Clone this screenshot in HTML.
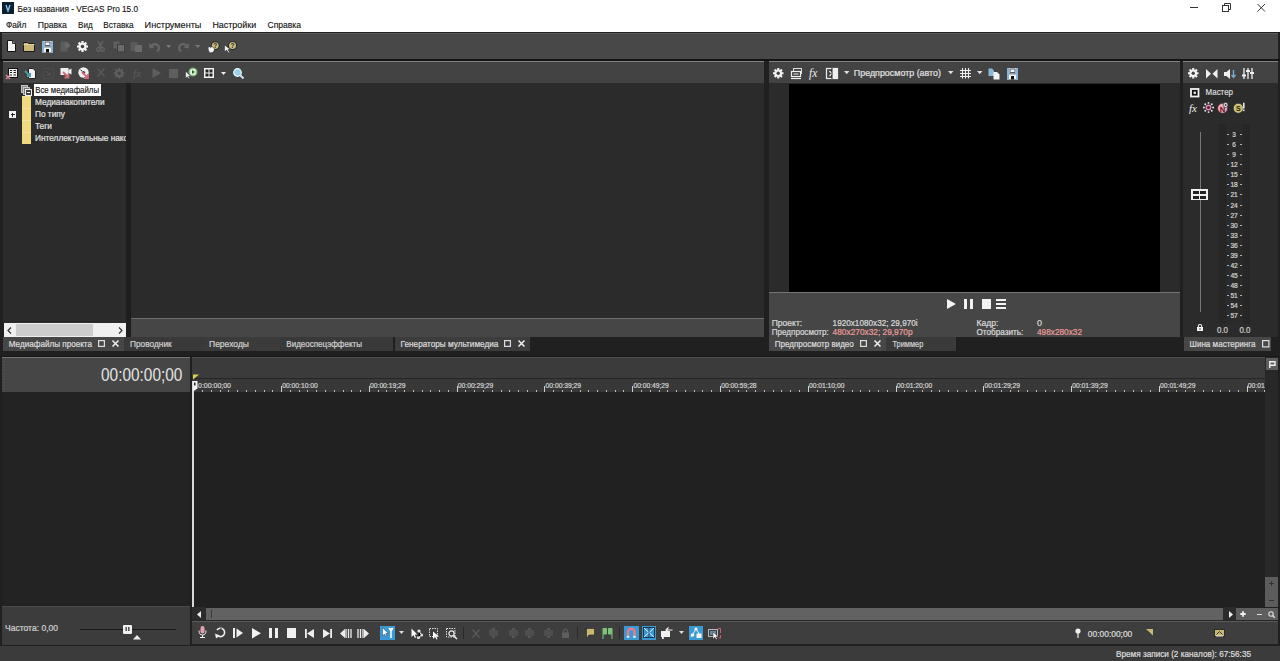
<!DOCTYPE html>
<html><head><meta charset="utf-8">
<style>
*{margin:0;padding:0;box-sizing:border-box}
html,body{width:1280px;height:661px;overflow:hidden;background:#1f1f1f;font-family:"Liberation Sans",sans-serif;position:relative}
.a{position:absolute}
.t{position:absolute;white-space:nowrap;line-height:1}
svg{overflow:visible}
</style></head><body>
<div class="a" style="left:0px;top:0px;width:1280px;height:32px;background:#fff;"></div>
<div class="a" style="left:2px;top:2px;width:12px;height:12px;background:#0c2032;"></div>
<svg class="a" style="left:2px;top:2px;" width="12" height="12" viewBox="0 0 12 12"><path d="M4 3 L6 9 L8 3" fill="none" stroke="#8cc8ea" stroke-width="1.3"/></svg>
<svg class="a" style="left:17px;top:-4px;" width="128" height="22"><text transform="translate(0.60 16.10) scale(1 1.08)" font-size="8.8" fill="#111" stroke="#111" stroke-width="0.12" font-family="Liberation Sans" textLength="120.50" lengthAdjust="spacingAndGlyphs">Без названия - VEGAS Pro 15.0</text></svg>
<div class="a" style="left:1190px;top:7px;width:8px;height:1px;background:#333;"></div>
<svg class="a" style="left:1222px;top:3px;" width="10" height="9" viewBox="0 0 10 9"><rect x="0.5" y="2.5" width="6" height="6" fill="none" stroke="#333"/><path d="M2.5 2.5 V0.5 H8.5 V6.5 H6.5" fill="none" stroke="#333"/></svg>
<svg class="a" style="left:1257px;top:4px;" width="9" height="8" viewBox="0 0 9 8"><path d="M0.5 0 L8 7.5 M8 0 L0.5 7.5" stroke="#333" stroke-width="1"/></svg>
<svg class="a" style="left:5px;top:12px;" width="28" height="22"><text transform="translate(0.90 16.00) scale(1 1.06)" font-size="8.9" fill="#111" stroke="#111" stroke-width="0.12" font-family="Liberation Sans" textLength="20.50" lengthAdjust="spacingAndGlyphs">Файл</text></svg>
<svg class="a" style="left:37px;top:12px;" width="37" height="22"><text transform="translate(0.70 16.00) scale(1 1.06)" font-size="8.9" fill="#111" stroke="#111" stroke-width="0.12" font-family="Liberation Sans" textLength="29.10" lengthAdjust="spacingAndGlyphs">Правка</text></svg>
<svg class="a" style="left:78px;top:12px;" width="23" height="22"><text transform="translate(0.00 16.00) scale(1 1.06)" font-size="8.9" fill="#111" stroke="#111" stroke-width="0.12" font-family="Liberation Sans" textLength="14.60" lengthAdjust="spacingAndGlyphs">Вид</text></svg>
<svg class="a" style="left:103px;top:12px;" width="38" height="22"><text transform="translate(0.20 16.00) scale(1 1.06)" font-size="8.9" fill="#111" stroke="#111" stroke-width="0.12" font-family="Liberation Sans" textLength="30.40" lengthAdjust="spacingAndGlyphs">Вставка</text></svg>
<svg class="a" style="left:144px;top:12px;" width="65" height="22"><text transform="translate(0.60 16.00) scale(1 1.06)" font-size="8.9" fill="#111" stroke="#111" stroke-width="0.12" font-family="Liberation Sans" textLength="56.80" lengthAdjust="spacingAndGlyphs">Инструменты</text></svg>
<svg class="a" style="left:212px;top:12px;" width="52" height="22"><text transform="translate(0.40 16.00) scale(1 1.06)" font-size="8.9" fill="#111" stroke="#111" stroke-width="0.12" font-family="Liberation Sans" textLength="43.80" lengthAdjust="spacingAndGlyphs">Настройки</text></svg>
<svg class="a" style="left:267px;top:12px;" width="42" height="22"><text transform="translate(0.50 16.00) scale(1 1.06)" font-size="8.9" fill="#111" stroke="#111" stroke-width="0.12" font-family="Liberation Sans" textLength="33.50" lengthAdjust="spacingAndGlyphs">Справка</text></svg>
<div class="a" style="left:0px;top:32px;width:1280px;height:629px;background:#202020;"></div>
<div class="a" style="left:2px;top:33px;width:1276px;height:1px;background:#5a5a5a;"></div>
<div class="a" style="left:2px;top:34px;width:1276px;height:25px;background:#484848;"></div>
<div class="a" style="left:0px;top:59px;width:1280px;height:2px;background:#141414;"></div>
<svg class="a" style="left:7px;top:40px;" width="9" height="12" viewBox="0 0 9 12"><path d="M0.5 0.5 H5.5 L8.5 3.5 V11.5 H0.5 Z" fill="#f2f2f2" stroke="#111" stroke-width="1"/><path d="M5.5 0.5 V3.5 H8.5" fill="#999" stroke="#111" stroke-width="0.8"/></svg>
<svg class="a" style="left:23px;top:41px;" width="12" height="11" viewBox="0 0 12 11"><path d="M0.5 1.5 H4.5 L5.5 2.5 H11.5 V10.5 H0.5 Z" fill="#c9b87a" stroke="#1a1a1a" stroke-width="1"/><path d="M0.5 3.5 H11.5" stroke="#e3d69c" stroke-width="1"/></svg>
<svg class="a" style="left:41.5px;top:40.5px;" width="11" height="11.5" viewBox="0 0 11 11.5"><rect x="0" y="0" width="11" height="11.5" fill="#f4f6f8"/><rect x="0" y="0" width="2" height="11.5" fill="#86b4dc"/><rect x="9" y="0" width="2" height="11.5" fill="#86b4dc"/><rect x="3" y="1" width="5" height="3.5" fill="#f4f6f8" stroke="#24384c" stroke-width="0.8"/><rect x="2" y="5.5" width="7" height="0.8" fill="#2a3e52"/><rect x="4" y="8" width="3" height="3.5" fill="#111"/></svg>
<svg class="a" style="left:59.5px;top:40.5px;" width="11" height="11" viewBox="0 0 11 11"><rect x="0.5" y="0.5" width="7" height="10" fill="#5c5c5c"/><path d="M4 3 L8 1 L10.5 5 L6 8 Z" fill="#676767"/></svg>
<svg class="a" style="left:77.3px;top:41px;" width="11" height="11" viewBox="0 0 11 11"><rect x="4.40" y="0" width="2.20" height="5.50" fill="#f2f2f2" transform="rotate(0 5.5 5.5)"/><rect x="4.40" y="0" width="2.20" height="5.50" fill="#f2f2f2" transform="rotate(45 5.5 5.5)"/><rect x="4.40" y="0" width="2.20" height="5.50" fill="#f2f2f2" transform="rotate(90 5.5 5.5)"/><rect x="4.40" y="0" width="2.20" height="5.50" fill="#f2f2f2" transform="rotate(135 5.5 5.5)"/><rect x="4.40" y="0" width="2.20" height="5.50" fill="#f2f2f2" transform="rotate(180 5.5 5.5)"/><rect x="4.40" y="0" width="2.20" height="5.50" fill="#f2f2f2" transform="rotate(225 5.5 5.5)"/><rect x="4.40" y="0" width="2.20" height="5.50" fill="#f2f2f2" transform="rotate(270 5.5 5.5)"/><rect x="4.40" y="0" width="2.20" height="5.50" fill="#f2f2f2" transform="rotate(315 5.5 5.5)"/><circle cx="5.5" cy="5.5" r="3.96" fill="#f2f2f2"/><circle cx="5.5" cy="5.5" r="1.76" fill="#424242"/></svg>
<svg class="a" style="left:96px;top:41px;" width="9" height="11" viewBox="0 0 9 11"><path d="M2 0 L6 7 M7 0 L3 7" stroke="#646464" stroke-width="1.5"/><circle cx="2.5" cy="8.5" r="1.8" fill="none" stroke="#646464" stroke-width="1.2"/><circle cx="6.5" cy="8.5" r="1.8" fill="none" stroke="#646464" stroke-width="1.2"/></svg>
<svg class="a" style="left:112.5px;top:40.5px;" width="12" height="11" viewBox="0 0 12 11"><rect x="0.5" y="0.5" width="6" height="7" fill="#5e5e5e"/><rect x="4.5" y="3.5" width="7" height="7.5" fill="#6a6a6a" stroke="#3e3e3e"/></svg>
<svg class="a" style="left:130px;top:40.5px;" width="12" height="11" viewBox="0 0 12 11"><rect x="0.5" y="1" width="7" height="9" fill="#5a5a5a"/><rect x="5" y="4" width="7" height="7" fill="#6a6a6a"/></svg>
<svg class="a" style="left:149px;top:41.5px;" width="11" height="10" viewBox="0 0 11 10"><path d="M2 4 Q6 0 9.5 4 Q11 7 8 9.5" fill="none" stroke="#676767" stroke-width="2"/><path d="M0 1 L0.5 6.5 L5.5 5.5 Z" fill="#676767"/></svg>
<svg class="a" style="left:166.3px;top:44.5px;" width="5.5" height="3" viewBox="0 0 5.5 3"><path d="M0 0 H5.5 L2.75 3 Z" fill="#777"/></svg>
<svg class="a" style="left:177.8px;top:41.5px;" width="11" height="10" viewBox="0 0 11 10"><path d="M9 4 Q5 0 1.5 4 Q0 7 3 9.5" fill="none" stroke="#676767" stroke-width="2"/><path d="M11 1 L10.5 6.5 L5.5 5.5 Z" fill="#676767"/></svg>
<svg class="a" style="left:195.3px;top:44.5px;" width="5.5" height="3" viewBox="0 0 5.5 3"><path d="M0 0 H5.5 L2.75 3 Z" fill="#777"/></svg>
<svg class="a" style="left:206.5px;top:40.5px;" width="13" height="12" viewBox="0 0 13 12"><circle cx="8.3" cy="4.6" r="4.3" fill="#222"/><circle cx="8.3" cy="4.6" r="3.4" fill="#cdbf80"/><text x="8.3" y="7.2" font-size="6.5" font-weight="bold" text-anchor="middle" fill="#222" font-family="Liberation Sans">?</text><path d="M1 6.5 Q2.5 5 4 6.5 L4.5 5.5 Q6.5 5.5 7.5 8 Q7 12 3.5 11.8 Q1 11 1 6.5Z" fill="#f2f2f2" stroke="#222" stroke-width="0.5"/></svg>
<svg class="a" style="left:224px;top:40.5px;" width="13" height="12" viewBox="0 0 13 12"><circle cx="8.5" cy="4.6" r="4.4" fill="#222"/><circle cx="8.5" cy="4.6" r="3.5" fill="#cdbf80"/><text x="8.5" y="7.2" font-size="6.5" font-weight="bold" text-anchor="middle" fill="#222" font-family="Liberation Sans">?</text><path d="M0.5 4 L0.5 11 L2.5 9 L4.5 12 L5.5 11.3 L4 8.5 L6.5 8.5 Z" fill="#f2f2f2" stroke="#222" stroke-width="0.5"/></svg>
<div class="a" style="left:3px;top:61px;width:761px;height:1px;background:#828282;"></div>
<div class="a" style="left:3px;top:62px;width:761px;height:21px;background:#434343;"></div>
<svg class="a" style="left:6px;top:67.5px;" width="12" height="11" viewBox="0 0 12 11"><rect x="2.5" y="0.5" width="9" height="9" fill="#f0f0f0" stroke="#111"/><path d="M4 2.5 H6 M7.5 2.5 H10 M4 4.5 H6 M7.5 4.5 H10 M4 7 H6 M7.5 7 H10" stroke="#222" stroke-width="1.2"/><path d="M0 7 L4 11 M4 7 L0 11" stroke="#d68a9a" stroke-width="1.4"/></svg>
<svg class="a" style="left:24.5px;top:67.5px;" width="11" height="11" viewBox="0 0 11 11"><path d="M3.5 0.5 H8 L10.5 3 V10.5 H3.5 Z" fill="#f2f2f2" stroke="#222"/><path d="M0 3 L5 8 M5 5 V8 H2" fill="none" stroke="#4a9aaa" stroke-width="2"/></svg>
<svg class="a" style="left:42.5px;top:67.5px;" width="11" height="11" viewBox="0 0 11 11"><rect x="0.5" y="0.5" width="10" height="10" fill="none" stroke="#4a4a4a"/><path d="M3 3 L7 7 M7 4 V7 H4" fill="none" stroke="#555" stroke-width="1"/></svg>
<svg class="a" style="left:60px;top:67px;" width="12" height="12" viewBox="0 0 12 12"><rect x="0.5" y="1" width="8" height="7" fill="#f0f0f0"/><path d="M8.5 3 L11.5 1.5 V7.5 L8.5 6 Z" fill="#f0f0f0"/><path d="M3 5 L8.5 10.5 M8.5 6.5 V10.5 H4.5" fill="none" stroke="#d06a7a" stroke-width="1.8"/></svg>
<svg class="a" style="left:77.5px;top:67px;" width="12" height="12" viewBox="0 0 12 12"><circle cx="5.5" cy="5.5" r="5.2" fill="#f0f0f0"/><circle cx="5.5" cy="5.5" r="1.6" fill="#333"/><path d="M2.5 3 L4 4" stroke="#222" stroke-width="1"/><path d="M4 5 L10 11 M10 7 V11 H6" fill="none" stroke="#d06a7a" stroke-width="1.8"/></svg>
<svg class="a" style="left:97px;top:68px;" width="8" height="9" viewBox="0 0 8 9"><path d="M0.5 0.5 L7.5 8.5 M7.5 0.5 L0.5 8.5" stroke="#5a5a5a" stroke-width="1.2"/></svg>
<svg class="a" style="left:113.7px;top:67.5px;" width="10.5" height="10.5" viewBox="0 0 10.5 10.5"><rect x="4.20" y="0" width="2.10" height="5.25" fill="#5e5e5e" transform="rotate(0 5.25 5.25)"/><rect x="4.20" y="0" width="2.10" height="5.25" fill="#5e5e5e" transform="rotate(45 5.25 5.25)"/><rect x="4.20" y="0" width="2.10" height="5.25" fill="#5e5e5e" transform="rotate(90 5.25 5.25)"/><rect x="4.20" y="0" width="2.10" height="5.25" fill="#5e5e5e" transform="rotate(135 5.25 5.25)"/><rect x="4.20" y="0" width="2.10" height="5.25" fill="#5e5e5e" transform="rotate(180 5.25 5.25)"/><rect x="4.20" y="0" width="2.10" height="5.25" fill="#5e5e5e" transform="rotate(225 5.25 5.25)"/><rect x="4.20" y="0" width="2.10" height="5.25" fill="#5e5e5e" transform="rotate(270 5.25 5.25)"/><rect x="4.20" y="0" width="2.10" height="5.25" fill="#5e5e5e" transform="rotate(315 5.25 5.25)"/><circle cx="5.25" cy="5.25" r="3.78" fill="#5e5e5e"/><circle cx="5.25" cy="5.25" r="1.68" fill="#424242"/></svg>
<svg class="a" style="left:133px;top:67.5px;" width="10" height="11" viewBox="0 0 10 11"><text x="0" y="9" font-size="11" font-style="italic" font-family="Liberation Serif" fill="#5c5c5c">fx</text></svg>
<svg class="a" style="left:151.5px;top:68px;" width="9" height="10" viewBox="0 0 9 10"><path d="M0.5 0 L9 5 L0.5 10 Z" fill="#5e5e5e"/></svg>
<div class="a" style="left:169px;top:68.5px;width:9px;height:9px;background:#5e5e5e;"></div>
<svg class="a" style="left:185px;top:67px;" width="13" height="12" viewBox="0 0 13 12"><circle cx="8" cy="5" r="4.6" fill="#6ab06a"/><circle cx="8" cy="5" r="3.2" fill="#dff0df"/><path d="M7 3 L10 5 L7 7Z" fill="#2a6a2a"/><path d="M0.5 4 L0.5 11.5 L2.3 9.8 L3.8 12 L4.8 11.5 L3.5 9.3 L5.7 9.3 Z" fill="#f4f4f4" stroke="#222" stroke-width="0.5"/></svg>
<svg class="a" style="left:204px;top:68px;" width="10" height="10" viewBox="0 0 10 10"><rect x="0" y="0" width="10" height="10" fill="#f2f2f2"/><rect x="1.5" y="1.5" width="3" height="3" fill="#222"/><rect x="5.5" y="1.5" width="3" height="3" fill="#222"/><rect x="1.5" y="5.5" width="3" height="3" fill="#222"/><rect x="5.5" y="5.5" width="3" height="3" fill="#222"/></svg>
<svg class="a" style="left:221px;top:71.5px;" width="5" height="3" viewBox="0 0 5 3"><path d="M0 0 H5 L2.5 3 Z" fill="#eee"/></svg>
<svg class="a" style="left:232.5px;top:67.5px;" width="11" height="11" viewBox="0 0 11 11"><circle cx="4.5" cy="4.5" r="3.8" fill="#9fd0ea" stroke="#dff" stroke-width="1.2"/><path d="M7 7 L10.5 10.5" stroke="#cfe6f0" stroke-width="2"/></svg>
<div class="a" style="left:3px;top:83px;width:123px;height:240px;background:#2b2b2b;"></div>
<div class="a" style="left:126px;top:83px;width:5px;height:254px;background:#1e1e1e;"></div>
<div class="a" style="left:131px;top:83px;width:633px;height:235px;background:#2b2b2b;"></div>
<div class="a" style="left:131px;top:318px;width:633px;height:1px;background:#6e6e6e;"></div>
<div class="a" style="left:131px;top:319px;width:633px;height:18px;background:#464646;"></div>
<div class="a" style="left:4px;top:323px;width:122px;height:14px;background:#f0f0f0;"></div>
<div class="a" style="left:16px;top:324px;width:77px;height:12px;background:#cdcdcd;"></div>
<svg class="a" style="left:7px;top:327px;" width="5" height="7" viewBox="0 0 5 7"><path d="M4 0.5 L1 3.5 L4 6.5" fill="none" stroke="#333" stroke-width="1.2"/></svg>
<svg class="a" style="left:118px;top:327px;" width="5" height="7" viewBox="0 0 5 7"><path d="M1 0.5 L4 3.5 L1 6.5" fill="none" stroke="#333" stroke-width="1.2"/></svg>
<svg class="a" style="left:21px;top:84.5px;" width="11" height="11" viewBox="0 0 11 11"><rect x="0.5" y="0.5" width="6" height="7" fill="#888" stroke="#ddd" stroke-width="0.8"/><rect x="2.5" y="2.5" width="6" height="7" fill="#777" stroke="#ddd" stroke-width="0.8"/><rect x="4.5" y="4.5" width="6" height="6" fill="#444" stroke="#eee" stroke-width="1"/><path d="M6 7.5 H9" stroke="#eee"/></svg>
<div class="a" style="left:34px;top:84px;width:67px;height:12px;background:#ffffff;"></div>
<svg class="a" style="left:35px;top:77px;" width="72" height="22"><text transform="translate(0.20 16.00) scale(1 1.06)" font-size="8.3" fill="#111" stroke="#111" stroke-width="0.12" font-family="Liberation Sans" textLength="63.80" lengthAdjust="spacingAndGlyphs">Все медиафайлы</text></svg>
<div class="a" style="left:22px;top:96px;width:9px;height:12px;background:#f0da80;"></div>
<div class="a" style="left:22px;top:96px;width:9px;height:1px;background:#f3e6a5;"></div>
<div class="a" style="left:35px;top:96px;width:91px;height:12px;overflow:hidden">
<svg class="a" style="left:0px;top:-7px;" width="78" height="22"><text transform="translate(0.00 16.30) scale(1 1.1)" font-size="8.29" fill="#e0e0e0" stroke="#e0e0e0" stroke-width="0.22" font-family="Liberation Sans">Медианакопители</text></svg>
</div>
<div class="a" style="left:22px;top:108px;width:9px;height:12px;background:#f0da80;"></div>
<div class="a" style="left:22px;top:108px;width:9px;height:1px;background:#f3e6a5;"></div>
<div class="a" style="left:35px;top:108px;width:91px;height:12px;overflow:hidden">
<svg class="a" style="left:0px;top:-7px;" width="38" height="22"><text transform="translate(0.00 16.30) scale(1 1.1)" font-size="8.29" fill="#e0e0e0" stroke="#e0e0e0" stroke-width="0.22" font-family="Liberation Sans">По типу</text></svg>
</div>
<div class="a" style="left:22px;top:120px;width:9px;height:12px;background:#f0da80;"></div>
<div class="a" style="left:22px;top:120px;width:9px;height:1px;background:#f3e6a5;"></div>
<div class="a" style="left:35px;top:120px;width:91px;height:12px;overflow:hidden">
<svg class="a" style="left:0px;top:-7px;" width="25" height="22"><text transform="translate(0.00 16.30) scale(1 1.1)" font-size="8.29" fill="#e0e0e0" stroke="#e0e0e0" stroke-width="0.22" font-family="Liberation Sans">Теги</text></svg>
</div>
<div class="a" style="left:22px;top:132px;width:9px;height:12px;background:#f0da80;"></div>
<div class="a" style="left:22px;top:132px;width:9px;height:1px;background:#f3e6a5;"></div>
<div class="a" style="left:35px;top:132px;width:91px;height:12px;overflow:hidden">
<svg class="a" style="left:0px;top:-7px;" width="128" height="22"><text transform="translate(0.00 16.30) scale(1 1.1)" font-size="8.29" fill="#e0e0e0" stroke="#e0e0e0" stroke-width="0.22" font-family="Liberation Sans">Интеллектуальные накопители</text></svg>
</div>
<div class="a" style="left:9px;top:111px;width:7px;height:7px;background:#f0f0f0;"></div>
<div class="a" style="left:10.5px;top:114px;width:4px;height:1px;background:#222;"></div>
<div class="a" style="left:12px;top:112.5px;width:1px;height:4px;background:#222;"></div>
<div class="a" style="left:769px;top:61px;width:411px;height:1px;background:#828282;"></div>
<div class="a" style="left:769px;top:62px;width:411px;height:21px;background:#434343;"></div>
<div class="a" style="left:769px;top:83px;width:411px;height:209px;background:#2b2b2b;"></div>
<div class="a" style="left:789px;top:84px;width:371px;height:208px;background:#000;"></div>
<div class="a" style="left:769px;top:292px;width:411px;height:1px;background:#747474;"></div>
<div class="a" style="left:769px;top:293px;width:411px;height:44px;background:#464646;"></div>
<svg class="a" style="left:772.8px;top:67.8px;" width="10.5" height="10.5" viewBox="0 0 10.5 10.5"><rect x="4.20" y="0" width="2.10" height="5.25" fill="#f2f2f2" transform="rotate(0 5.25 5.25)"/><rect x="4.20" y="0" width="2.10" height="5.25" fill="#f2f2f2" transform="rotate(45 5.25 5.25)"/><rect x="4.20" y="0" width="2.10" height="5.25" fill="#f2f2f2" transform="rotate(90 5.25 5.25)"/><rect x="4.20" y="0" width="2.10" height="5.25" fill="#f2f2f2" transform="rotate(135 5.25 5.25)"/><rect x="4.20" y="0" width="2.10" height="5.25" fill="#f2f2f2" transform="rotate(180 5.25 5.25)"/><rect x="4.20" y="0" width="2.10" height="5.25" fill="#f2f2f2" transform="rotate(225 5.25 5.25)"/><rect x="4.20" y="0" width="2.10" height="5.25" fill="#f2f2f2" transform="rotate(270 5.25 5.25)"/><rect x="4.20" y="0" width="2.10" height="5.25" fill="#f2f2f2" transform="rotate(315 5.25 5.25)"/><circle cx="5.25" cy="5.25" r="3.78" fill="#f2f2f2"/><circle cx="5.25" cy="5.25" r="1.68" fill="#424242"/></svg>
<svg class="a" style="left:790.5px;top:67.5px;" width="11" height="11" viewBox="0 0 11 11"><rect x="2.5" y="0.5" width="8" height="5" fill="none" stroke="#ddd" stroke-width="1"/><rect x="0.5" y="3.5" width="9" height="5" fill="#3e3e3e" stroke="#eee" stroke-width="1.2"/><path d="M2.5 6 H7.5" stroke="#eee"/><path d="M0 10.5 H10" stroke="#eee" stroke-width="1.2"/></svg>
<svg class="a" style="left:808.5px;top:67px;" width="11" height="12" viewBox="0 0 11 12"><text x="0" y="9.5" font-size="11.5" font-style="italic" font-family="Liberation Serif" fill="#eee">fx</text></svg>
<svg class="a" style="left:826px;top:67.5px;" width="12" height="11" viewBox="0 0 12 11"><rect x="0.5" y="0.5" width="11" height="10" fill="none" stroke="#eee" stroke-width="1.2"/><rect x="6" y="0.5" width="5.5" height="10" fill="#eee"/><path d="M3.5 3 L6 5.5 L3.5 8" fill="none" stroke="#eee" stroke-width="1.3"/><path d="M6 0 V11" stroke="#222" stroke-width="1"/></svg>
<svg class="a" style="left:843.5px;top:71.3px;" width="5.5" height="3.2" viewBox="0 0 5.5 3.2"><path d="M0 0 H5.5 L2.75 3.2 Z" fill="#ddd"/></svg>
<svg class="a" style="left:853px;top:60px;" width="95" height="22"><text transform="translate(0.80 16.00) scale(1 1.06)" font-size="8.5" fill="#e0e0e0" stroke="#e0e0e0" stroke-width="0.22" font-family="Liberation Sans" textLength="87.20" lengthAdjust="spacingAndGlyphs">Предпросмотр (авто)</text></svg>
<svg class="a" style="left:948px;top:71.3px;" width="5.5" height="3.2" viewBox="0 0 5.5 3.2"><path d="M0 0 H5.5 L2.75 3.2 Z" fill="#ddd"/></svg>
<svg class="a" style="left:960px;top:67.8px;" width="11" height="10.5" viewBox="0 0 11 10.5"><path d="M2.5 0 V10.5 M5.5 0 V10.5 M8.5 0 V10.5 M0 2.5 H11 M0 5.5 H11 M0 8.5 H11" stroke="#eee" stroke-width="1.1"/></svg>
<svg class="a" style="left:977px;top:71.3px;" width="5.5" height="3.2" viewBox="0 0 5.5 3.2"><path d="M0 0 H5.5 L2.75 3.2 Z" fill="#ddd"/></svg>
<svg class="a" style="left:988px;top:67.5px;" width="12" height="11.5" viewBox="0 0 12 11.5"><path d="M0.5 0.5 H4 L6 2.5 V8 H0.5 Z" fill="#8ab8d8"/><path d="M5.5 4 H9 L11.5 6.5 V11.5 H5.5 Z" fill="#f2f2f2"/></svg>
<svg class="a" style="left:1006.5px;top:67.5px;" width="11" height="11.5" viewBox="0 0 11 11.5"><rect x="0" y="0" width="11" height="11.5" fill="#f4f6f8"/><rect x="0" y="0" width="2" height="11.5" fill="#86b4dc"/><rect x="9" y="0" width="2" height="11.5" fill="#86b4dc"/><rect x="3" y="1" width="5" height="3.5" fill="#f4f6f8" stroke="#24384c" stroke-width="0.8"/><rect x="2" y="5.5" width="7" height="0.8" fill="#2a3e52"/><rect x="4" y="8" width="3" height="3.5" fill="#111"/></svg>
<svg class="a" style="left:947px;top:298.8px;" width="9" height="10" viewBox="0 0 9 10"><path d="M0 0 L9 5 L0 10 Z" fill="#f2f2f2"/></svg>
<div class="a" style="left:964px;top:299px;width:3px;height:10px;background:#f2f2f2;"></div>
<div class="a" style="left:970px;top:299px;width:3px;height:10px;background:#f2f2f2;"></div>
<div class="a" style="left:982px;top:299px;width:9px;height:10px;background:#f2f2f2;"></div>
<div class="a" style="left:996px;top:299px;width:10px;height:2px;background:#f2f2f2;"></div>
<div class="a" style="left:996px;top:303px;width:10px;height:2px;background:#f2f2f2;"></div>
<div class="a" style="left:996px;top:307px;width:10px;height:2px;background:#f2f2f2;"></div>
<svg class="a" style="left:771px;top:309px;" width="38" height="22"><text transform="translate(0.70 16.60) scale(1 1.06)" font-size="8.5" fill="#d8d8d8" stroke="#d8d8d8" stroke-width="0.22" font-family="Liberation Sans" textLength="30.50" lengthAdjust="spacingAndGlyphs">Проект:</text></svg>
<svg class="a" style="left:832px;top:309px;" width="93" height="22"><text transform="translate(0.60 16.60) scale(1 1.06)" font-size="8.5" fill="#d8d8d8" stroke="#d8d8d8" stroke-width="0.22" font-family="Liberation Sans" textLength="85.00" lengthAdjust="spacingAndGlyphs">1920x1080x32; 29,970i</text></svg>
<svg class="a" style="left:771px;top:319px;" width="65" height="22"><text transform="translate(0.70 16.30) scale(1 1.06)" font-size="8.5" fill="#d8d8d8" stroke="#d8d8d8" stroke-width="0.22" font-family="Liberation Sans" textLength="57.00" lengthAdjust="spacingAndGlyphs">Предпросмотр:</text></svg>
<svg class="a" style="left:832px;top:319px;" width="88" height="22"><text transform="translate(0.60 16.30) scale(1 1.06)" font-size="8.5" fill="#e89a9a" stroke="#e89a9a" stroke-width="0.22" font-family="Liberation Sans" textLength="80.00" lengthAdjust="spacingAndGlyphs">480x270x32; 29,970p</text></svg>
<svg class="a" style="left:976px;top:309px;" width="30" height="22"><text transform="translate(0.40 16.60) scale(1 1.06)" font-size="8.5" fill="#d8d8d8" stroke="#d8d8d8" stroke-width="0.22" font-family="Liberation Sans" textLength="22.00" lengthAdjust="spacingAndGlyphs">Кадр:</text></svg>
<svg class="a" style="left:1037px;top:309px;" width="13" height="22"><text transform="translate(0.00 16.60) scale(1 1.06)" font-size="8.99" fill="#d8d8d8" stroke="#d8d8d8" stroke-width="0.22" font-family="Liberation Sans">0</text></svg>
<svg class="a" style="left:976px;top:319px;" width="55" height="22"><text transform="translate(0.40 16.30) scale(1 1.06)" font-size="8.5" fill="#d8d8d8" stroke="#d8d8d8" stroke-width="0.22" font-family="Liberation Sans" textLength="47.00" lengthAdjust="spacingAndGlyphs">Отобразить:</text></svg>
<svg class="a" style="left:1037px;top:319px;" width="53" height="22"><text transform="translate(0.00 16.30) scale(1 1.06)" font-size="8.5" fill="#e89a9a" stroke="#e89a9a" stroke-width="0.22" font-family="Liberation Sans" textLength="45.00" lengthAdjust="spacingAndGlyphs">498x280x32</text></svg>
<div class="a" style="left:3px;top:337px;width:121px;height:14px;background:#474747;"></div>
<svg class="a" style="left:8px;top:331px;" width="91" height="22"><text transform="translate(0.75 16.00) scale(1 1.06)" font-size="8.5" fill="#dcdcdc" stroke="#dcdcdc" stroke-width="0.22" font-family="Liberation Sans" textLength="83.20" lengthAdjust="spacingAndGlyphs">Медиафайлы проекта</text></svg>
<svg class="a" style="left:97.5px;top:340px;" width="7" height="7" viewBox="0 0 7 7"><rect x="0.6" y="0.6" width="5.8" height="5.8" fill="none" stroke="#ddd" stroke-width="1.2"/></svg>
<svg class="a" style="left:111.5px;top:340px;" width="7" height="7" viewBox="0 0 7 7"><path d="M0.5 0.5 L6.5 6.5 M6.5 0.5 L0.5 6.5" stroke="#f0f0f0" stroke-width="1.5"/></svg>
<div class="a" style="left:124px;top:337px;width:80px;height:14px;background:#393939;"></div>
<div class="a" style="left:204px;top:337px;width:76px;height:14px;background:#3b3b3b;"></div>
<div class="a" style="left:280px;top:337px;width:113px;height:14px;background:#393939;"></div>
<div class="a" style="left:395px;top:337px;width:135px;height:14px;background:#3d3d3d;"></div>
<svg class="a" style="left:130px;top:331px;" width="50" height="22"><text transform="translate(0.00 16.00) scale(1 1.06)" font-size="8.5" fill="#d0d0d0" stroke="#d0d0d0" stroke-width="0.22" font-family="Liberation Sans" textLength="41.70" lengthAdjust="spacingAndGlyphs">Проводник</text></svg>
<svg class="a" style="left:209px;top:331px;" width="48" height="22"><text transform="translate(0.00 16.00) scale(1 1.06)" font-size="8.5" fill="#d0d0d0" stroke="#d0d0d0" stroke-width="0.22" font-family="Liberation Sans" textLength="40.00" lengthAdjust="spacingAndGlyphs">Переходы</text></svg>
<svg class="a" style="left:286px;top:331px;" width="84" height="22"><text transform="translate(0.30 16.00) scale(1 1.06)" font-size="8.5" fill="#d0d0d0" stroke="#d0d0d0" stroke-width="0.22" font-family="Liberation Sans" textLength="75.70" lengthAdjust="spacingAndGlyphs">Видеоспецэффекты</text></svg>
<svg class="a" style="left:400px;top:331px;" width="106" height="22"><text transform="translate(0.60 16.00) scale(1 1.06)" font-size="8.5" fill="#dcdcdc" stroke="#dcdcdc" stroke-width="0.22" font-family="Liberation Sans" textLength="97.70" lengthAdjust="spacingAndGlyphs">Генераторы мультимедиа</text></svg>
<svg class="a" style="left:503.6px;top:340px;" width="7" height="7" viewBox="0 0 7 7"><rect x="0.6" y="0.6" width="5.8" height="5.8" fill="none" stroke="#ddd" stroke-width="1.2"/></svg>
<svg class="a" style="left:517.7px;top:340px;" width="7" height="7" viewBox="0 0 7 7"><path d="M0.5 0.5 L6.5 6.5 M6.5 0.5 L0.5 6.5" stroke="#f0f0f0" stroke-width="1.5"/></svg>
<div class="a" style="left:769px;top:337px;width:117px;height:14px;background:#474747;"></div>
<div class="a" style="left:886px;top:337px;width:70px;height:14px;background:#3a3a3a;"></div>
<svg class="a" style="left:774px;top:331px;" width="87" height="22"><text transform="translate(0.80 16.00) scale(1 1.06)" font-size="8.5" fill="#dcdcdc" stroke="#dcdcdc" stroke-width="0.22" font-family="Liberation Sans" textLength="79.00" lengthAdjust="spacingAndGlyphs">Предпросмотр видео</text></svg>
<svg class="a" style="left:860px;top:340px;" width="7" height="7" viewBox="0 0 7 7"><rect x="0.6" y="0.6" width="5.8" height="5.8" fill="none" stroke="#ddd" stroke-width="1.2"/></svg>
<svg class="a" style="left:874px;top:340px;" width="7" height="7" viewBox="0 0 7 7"><path d="M0.5 0.5 L6.5 6.5 M6.5 0.5 L0.5 6.5" stroke="#f0f0f0" stroke-width="1.5"/></svg>
<svg class="a" style="left:892px;top:331px;" width="39" height="22"><text transform="translate(0.50 16.00) scale(1 1.06)" font-size="8.5" fill="#d0d0d0" stroke="#d0d0d0" stroke-width="0.22" font-family="Liberation Sans" textLength="30.80" lengthAdjust="spacingAndGlyphs">Триммер</text></svg>
<div class="a" style="left:1183px;top:61px;width:95px;height:1px;background:#828282;"></div>
<div class="a" style="left:1183px;top:62px;width:95px;height:21px;background:#434343;"></div>
<div class="a" style="left:1183px;top:83px;width:95px;height:254px;background:#2b2b2b;"></div>
<svg class="a" style="left:1187.5px;top:68px;" width="10.5" height="10.5" viewBox="0 0 10.5 10.5"><rect x="4.20" y="0" width="2.10" height="5.25" fill="#f2f2f2" transform="rotate(0 5.25 5.25)"/><rect x="4.20" y="0" width="2.10" height="5.25" fill="#f2f2f2" transform="rotate(45 5.25 5.25)"/><rect x="4.20" y="0" width="2.10" height="5.25" fill="#f2f2f2" transform="rotate(90 5.25 5.25)"/><rect x="4.20" y="0" width="2.10" height="5.25" fill="#f2f2f2" transform="rotate(135 5.25 5.25)"/><rect x="4.20" y="0" width="2.10" height="5.25" fill="#f2f2f2" transform="rotate(180 5.25 5.25)"/><rect x="4.20" y="0" width="2.10" height="5.25" fill="#f2f2f2" transform="rotate(225 5.25 5.25)"/><rect x="4.20" y="0" width="2.10" height="5.25" fill="#f2f2f2" transform="rotate(270 5.25 5.25)"/><rect x="4.20" y="0" width="2.10" height="5.25" fill="#f2f2f2" transform="rotate(315 5.25 5.25)"/><circle cx="5.25" cy="5.25" r="3.78" fill="#f2f2f2"/><circle cx="5.25" cy="5.25" r="1.68" fill="#424242"/></svg>
<svg class="a" style="left:1205.5px;top:68.5px;" width="11.5" height="9.5" viewBox="0 0 11.5 9.5"><path d="M0 0 L5 4.75 L0 9.5 Z M11.5 0 L6.5 4.75 L11.5 9.5 Z" fill="#f0f0f0"/></svg>
<svg class="a" style="left:1223.5px;top:68.5px;" width="12.5" height="10" viewBox="0 0 12.5 10"><path d="M0 3 H2.5 L6 0 V10 L2.5 7 H0 Z" fill="#f0f0f0"/><path d="M9.5 1 V8 M7.5 6 L9.5 8.5 L11.5 6" fill="none" stroke="#7aaccc" stroke-width="1.4"/></svg>
<svg class="a" style="left:1241.5px;top:68px;" width="12" height="11" viewBox="0 0 12 11"><path d="M2 0 V11 M6 0 V11 M10 0 V11" stroke="#f0f0f0" stroke-width="1.3"/><rect x="0" y="6.5" width="4" height="2" fill="#f0f0f0"/><rect x="4" y="2" width="4" height="2" fill="#f0f0f0"/><rect x="8" y="4" width="4" height="2" fill="#f0f0f0"/></svg>
<svg class="a" style="left:1189.5px;top:87.5px;" width="9.5" height="9.5" viewBox="0 0 9.5 9.5"><rect x="1" y="1" width="7.5" height="7.5" fill="#111" stroke="#f2f2f2" stroke-width="1.8"/><rect x="3.6" y="3.6" width="2.3" height="2.3" fill="#eee"/></svg>
<svg class="a" style="left:1205px;top:78px;" width="36" height="22"><text transform="translate(0.50 16.90) scale(1 1.06)" font-size="8.5" fill="#d8d8d8" stroke="#d8d8d8" stroke-width="0.22" font-family="Liberation Sans" textLength="27.50" lengthAdjust="spacingAndGlyphs">Мастер</text></svg>
<svg class="a" style="left:1188.6px;top:101.5px;" width="10" height="12" viewBox="0 0 10 12"><text x="0" y="9.5" font-size="11" font-style="italic" font-family="Liberation Serif" fill="#eee">fx</text></svg>
<svg class="a" style="left:1203px;top:101.5px;" width="11" height="11" viewBox="0 0 11 11"><circle cx="10.10" cy="5.50" r="0.95" fill="#f0e0e8"/><circle cx="8.75" cy="8.75" r="0.95" fill="#f0e0e8"/><circle cx="5.50" cy="10.10" r="0.95" fill="#f0e0e8"/><circle cx="2.25" cy="8.75" r="0.95" fill="#f0e0e8"/><circle cx="0.90" cy="5.50" r="0.95" fill="#f0e0e8"/><circle cx="2.25" cy="2.25" r="0.95" fill="#f0e0e8"/><circle cx="5.50" cy="0.90" r="0.95" fill="#f0e0e8"/><circle cx="8.75" cy="2.25" r="0.95" fill="#f0e0e8"/><circle cx="5.5" cy="5.5" r="2.9" fill="#d890b0"/><circle cx="5.5" cy="5.5" r="1.6" fill="#6a1a3a"/></svg>
<svg class="a" style="left:1217px;top:101.5px;" width="12" height="12" viewBox="0 0 12 12"><circle cx="5.6" cy="6.3" r="5" fill="#f0a8b8" stroke="#3a1a22" stroke-width="0.6"/><text x="5.4" y="9.6" font-size="7.5" font-weight="bold" text-anchor="middle" fill="#5a1020" font-family="Liberation Sans">N</text><circle cx="8.6" cy="3" r="2.4" fill="#f0f0f0" stroke="#222" stroke-width="0.6"/><circle cx="8.6" cy="3" r="1" fill="#333"/></svg>
<svg class="a" style="left:1233px;top:101.5px;" width="12" height="12" viewBox="0 0 12 12"><circle cx="5.3" cy="6.3" r="5" fill="#d8cc88" stroke="#222" stroke-width="0.7"/><circle cx="5.3" cy="6.3" r="3.6" fill="#c8bc70"/><text x="5.3" y="9.3" font-size="7" font-weight="bold" text-anchor="middle" fill="#2a2410" font-family="Liberation Sans">S</text><path d="M10.8 0.8 V6.5" stroke="#f4f4f4" stroke-width="1.5"/><rect x="10.05" y="7.6" width="1.5" height="1.5" fill="#f4f4f4"/></svg>
<div class="a" style="left:1219px;top:124px;width:31px;height:200px;background:#262626;"></div>
<div class="a" style="left:1226px;top:124px;width:17px;height:200px;background:#2a2a2a;"></div>
<div class="a" style="left:1227px;top:134.0px;width:2px;height:1px;background:#b0b0b0;"></div>
<div class="a" style="left:1240px;top:134.0px;width:2px;height:1px;background:#b0b0b0;"></div>
<svg class="a" style="left:1232px;top:121px;" width="12" height="22"><text transform="translate(0.20 16.00) scale(1 1.06)" font-size="6.47" fill="#d0d0d0" stroke="#d0d0d0" stroke-width="0.22" font-family="Liberation Sans">3</text></svg>
<div class="a" style="left:1227px;top:144.08px;width:2px;height:1px;background:#b0b0b0;"></div>
<div class="a" style="left:1240px;top:144.08px;width:2px;height:1px;background:#b0b0b0;"></div>
<svg class="a" style="left:1232px;top:131px;" width="12" height="22"><text transform="translate(0.20 16.08) scale(1 1.06)" font-size="6.47" fill="#d0d0d0" stroke="#d0d0d0" stroke-width="0.22" font-family="Liberation Sans">6</text></svg>
<div class="a" style="left:1227px;top:154.16px;width:2px;height:1px;background:#b0b0b0;"></div>
<div class="a" style="left:1240px;top:154.16px;width:2px;height:1px;background:#b0b0b0;"></div>
<svg class="a" style="left:1232px;top:141px;" width="12" height="22"><text transform="translate(0.20 16.16) scale(1 1.06)" font-size="6.47" fill="#d0d0d0" stroke="#d0d0d0" stroke-width="0.22" font-family="Liberation Sans">9</text></svg>
<div class="a" style="left:1227px;top:164.24px;width:2px;height:1px;background:#b0b0b0;"></div>
<div class="a" style="left:1240px;top:164.24px;width:2px;height:1px;background:#b0b0b0;"></div>
<svg class="a" style="left:1230px;top:151px;" width="15" height="22"><text transform="translate(0.40 16.24) scale(1 1.06)" font-size="6.65" fill="#d0d0d0" stroke="#d0d0d0" stroke-width="0.22" font-family="Liberation Sans">12</text></svg>
<div class="a" style="left:1227px;top:174.32px;width:2px;height:1px;background:#b0b0b0;"></div>
<div class="a" style="left:1240px;top:174.32px;width:2px;height:1px;background:#b0b0b0;"></div>
<svg class="a" style="left:1230px;top:161px;" width="15" height="22"><text transform="translate(0.40 16.32) scale(1 1.06)" font-size="6.65" fill="#d0d0d0" stroke="#d0d0d0" stroke-width="0.22" font-family="Liberation Sans">15</text></svg>
<div class="a" style="left:1227px;top:184.4px;width:2px;height:1px;background:#b0b0b0;"></div>
<div class="a" style="left:1240px;top:184.4px;width:2px;height:1px;background:#b0b0b0;"></div>
<svg class="a" style="left:1230px;top:171px;" width="15" height="22"><text transform="translate(0.40 16.40) scale(1 1.06)" font-size="6.65" fill="#d0d0d0" stroke="#d0d0d0" stroke-width="0.22" font-family="Liberation Sans">18</text></svg>
<div class="a" style="left:1227px;top:194.48000000000002px;width:2px;height:1px;background:#b0b0b0;"></div>
<div class="a" style="left:1240px;top:194.48000000000002px;width:2px;height:1px;background:#b0b0b0;"></div>
<svg class="a" style="left:1230px;top:181px;" width="15" height="22"><text transform="translate(0.40 16.48) scale(1 1.06)" font-size="6.65" fill="#d0d0d0" stroke="#d0d0d0" stroke-width="0.22" font-family="Liberation Sans">21</text></svg>
<div class="a" style="left:1227px;top:204.56px;width:2px;height:1px;background:#b0b0b0;"></div>
<div class="a" style="left:1240px;top:204.56px;width:2px;height:1px;background:#b0b0b0;"></div>
<svg class="a" style="left:1230px;top:191px;" width="15" height="22"><text transform="translate(0.40 16.56) scale(1 1.06)" font-size="6.65" fill="#d0d0d0" stroke="#d0d0d0" stroke-width="0.22" font-family="Liberation Sans">24</text></svg>
<div class="a" style="left:1227px;top:214.64px;width:2px;height:1px;background:#b0b0b0;"></div>
<div class="a" style="left:1240px;top:214.64px;width:2px;height:1px;background:#b0b0b0;"></div>
<svg class="a" style="left:1230px;top:201px;" width="15" height="22"><text transform="translate(0.40 16.64) scale(1 1.06)" font-size="6.65" fill="#d0d0d0" stroke="#d0d0d0" stroke-width="0.22" font-family="Liberation Sans">27</text></svg>
<div class="a" style="left:1227px;top:224.72px;width:2px;height:1px;background:#b0b0b0;"></div>
<div class="a" style="left:1240px;top:224.72px;width:2px;height:1px;background:#b0b0b0;"></div>
<svg class="a" style="left:1230px;top:211px;" width="15" height="22"><text transform="translate(0.40 16.72) scale(1 1.06)" font-size="6.65" fill="#d0d0d0" stroke="#d0d0d0" stroke-width="0.22" font-family="Liberation Sans">30</text></svg>
<div class="a" style="left:1227px;top:234.8px;width:2px;height:1px;background:#b0b0b0;"></div>
<div class="a" style="left:1240px;top:234.8px;width:2px;height:1px;background:#b0b0b0;"></div>
<svg class="a" style="left:1230px;top:221px;" width="15" height="22"><text transform="translate(0.40 16.80) scale(1 1.06)" font-size="6.65" fill="#d0d0d0" stroke="#d0d0d0" stroke-width="0.22" font-family="Liberation Sans">33</text></svg>
<div class="a" style="left:1227px;top:244.88px;width:2px;height:1px;background:#b0b0b0;"></div>
<div class="a" style="left:1240px;top:244.88px;width:2px;height:1px;background:#b0b0b0;"></div>
<svg class="a" style="left:1230px;top:231px;" width="15" height="22"><text transform="translate(0.40 16.88) scale(1 1.06)" font-size="6.65" fill="#d0d0d0" stroke="#d0d0d0" stroke-width="0.22" font-family="Liberation Sans">36</text></svg>
<div class="a" style="left:1227px;top:254.96px;width:2px;height:1px;background:#b0b0b0;"></div>
<div class="a" style="left:1240px;top:254.96px;width:2px;height:1px;background:#b0b0b0;"></div>
<svg class="a" style="left:1230px;top:241px;" width="15" height="22"><text transform="translate(0.40 16.96) scale(1 1.06)" font-size="6.65" fill="#d0d0d0" stroke="#d0d0d0" stroke-width="0.22" font-family="Liberation Sans">39</text></svg>
<div class="a" style="left:1227px;top:265.03999999999996px;width:2px;height:1px;background:#b0b0b0;"></div>
<div class="a" style="left:1240px;top:265.03999999999996px;width:2px;height:1px;background:#b0b0b0;"></div>
<svg class="a" style="left:1230px;top:252px;" width="15" height="22"><text transform="translate(0.40 16.04) scale(1 1.06)" font-size="6.65" fill="#d0d0d0" stroke="#d0d0d0" stroke-width="0.22" font-family="Liberation Sans">42</text></svg>
<div class="a" style="left:1227px;top:275.12px;width:2px;height:1px;background:#b0b0b0;"></div>
<div class="a" style="left:1240px;top:275.12px;width:2px;height:1px;background:#b0b0b0;"></div>
<svg class="a" style="left:1230px;top:262px;" width="15" height="22"><text transform="translate(0.40 16.12) scale(1 1.06)" font-size="6.65" fill="#d0d0d0" stroke="#d0d0d0" stroke-width="0.22" font-family="Liberation Sans">45</text></svg>
<div class="a" style="left:1227px;top:285.2px;width:2px;height:1px;background:#b0b0b0;"></div>
<div class="a" style="left:1240px;top:285.2px;width:2px;height:1px;background:#b0b0b0;"></div>
<svg class="a" style="left:1230px;top:272px;" width="15" height="22"><text transform="translate(0.40 16.20) scale(1 1.06)" font-size="6.65" fill="#d0d0d0" stroke="#d0d0d0" stroke-width="0.22" font-family="Liberation Sans">48</text></svg>
<div class="a" style="left:1227px;top:295.28px;width:2px;height:1px;background:#b0b0b0;"></div>
<div class="a" style="left:1240px;top:295.28px;width:2px;height:1px;background:#b0b0b0;"></div>
<svg class="a" style="left:1230px;top:282px;" width="15" height="22"><text transform="translate(0.40 16.28) scale(1 1.06)" font-size="6.65" fill="#d0d0d0" stroke="#d0d0d0" stroke-width="0.22" font-family="Liberation Sans">51</text></svg>
<div class="a" style="left:1227px;top:305.36px;width:2px;height:1px;background:#b0b0b0;"></div>
<div class="a" style="left:1240px;top:305.36px;width:2px;height:1px;background:#b0b0b0;"></div>
<svg class="a" style="left:1230px;top:292px;" width="15" height="22"><text transform="translate(0.40 16.36) scale(1 1.06)" font-size="6.65" fill="#d0d0d0" stroke="#d0d0d0" stroke-width="0.22" font-family="Liberation Sans">54</text></svg>
<div class="a" style="left:1227px;top:315.44px;width:2px;height:1px;background:#b0b0b0;"></div>
<div class="a" style="left:1240px;top:315.44px;width:2px;height:1px;background:#b0b0b0;"></div>
<svg class="a" style="left:1230px;top:302px;" width="15" height="22"><text transform="translate(0.40 16.44) scale(1 1.06)" font-size="6.65" fill="#d0d0d0" stroke="#d0d0d0" stroke-width="0.22" font-family="Liberation Sans">57</text></svg>
<div class="a" style="left:1199.5px;top:132px;width:1px;height:180px;background:#777;"></div>
<div class="a" style="left:1191px;top:189px;width:17px;height:11px;background:#f0f0f0;"></div>
<div class="a" style="left:1192.5px;top:190.5px;width:6px;height:3.5px;background:#222;"></div>
<div class="a" style="left:1200px;top:190.5px;width:6px;height:3.5px;background:#222;"></div>
<div class="a" style="left:1192.5px;top:195.5px;width:6px;height:3px;background:#222;"></div>
<div class="a" style="left:1200px;top:195.5px;width:6px;height:3px;background:#222;"></div>
<svg class="a" style="left:1197px;top:323.5px;" width="6" height="7" viewBox="0 0 6 7"><rect x="0" y="3" width="6" height="4" fill="#f4f4f4"/><path d="M1.3 3.2 V2.2 A1.7 1.7 0 0 1 4.7 2.2 V3.2" fill="none" stroke="#f4f4f4" stroke-width="1.1"/><rect x="2.5" y="4.2" width="1" height="1.6" fill="#333"/></svg>
<svg class="a" style="left:1217px;top:317px;" width="19" height="22"><text transform="translate(0.00 16.00) scale(1 1.06)" font-size="8.5" fill="#d0d0d0" stroke="#d0d0d0" stroke-width="0.22" font-family="Liberation Sans" textLength="11.00" lengthAdjust="spacingAndGlyphs">0.0</text></svg>
<svg class="a" style="left:1239px;top:317px;" width="19" height="22"><text transform="translate(0.40 16.00) scale(1 1.06)" font-size="8.5" fill="#d0d0d0" stroke="#d0d0d0" stroke-width="0.22" font-family="Liberation Sans" textLength="11.00" lengthAdjust="spacingAndGlyphs">0.0</text></svg>
<div class="a" style="left:1184px;top:337px;width:87px;height:14px;background:#474747;"></div>
<svg class="a" style="left:1189px;top:330px;" width="74" height="22"><text transform="translate(0.50 16.70) scale(1 1.06)" font-size="8.5" fill="#dcdcdc" stroke="#dcdcdc" stroke-width="0.22" font-family="Liberation Sans" textLength="66.00" lengthAdjust="spacingAndGlyphs">Шина мастеринга</text></svg>
<svg class="a" style="left:1261.7px;top:340px;" width="7.5" height="7.5" viewBox="0 0 7.5 7.5"><rect x="0.6" y="0.6" width="6.3" height="6.3" fill="none" stroke="#ddd" stroke-width="1.2"/></svg>
<div class="a" style="left:0px;top:356px;width:1280px;height:1px;background:#171717;"></div>
<div class="a" style="left:2px;top:357px;width:188px;height:1px;background:#777777;"></div>
<div class="a" style="left:2px;top:358px;width:188px;height:34px;background:#464646;"></div>
<div class="a" style="left:4px;top:361px;width:1px;height:1px;background:#5a5a5a;"></div>
<div class="a" style="left:4px;top:364px;width:1px;height:1px;background:#5a5a5a;"></div>
<div class="a" style="left:4px;top:367px;width:1px;height:1px;background:#5a5a5a;"></div>
<div class="a" style="left:4px;top:370px;width:1px;height:1px;background:#5a5a5a;"></div>
<div class="a" style="left:4px;top:373px;width:1px;height:1px;background:#5a5a5a;"></div>
<div class="a" style="left:4px;top:376px;width:1px;height:1px;background:#5a5a5a;"></div>
<div class="a" style="left:4px;top:379px;width:1px;height:1px;background:#5a5a5a;"></div>
<div class="a" style="left:4px;top:382px;width:1px;height:1px;background:#5a5a5a;"></div>
<div class="a" style="left:4px;top:385px;width:1px;height:1px;background:#5a5a5a;"></div>
<div class="a" style="left:4px;top:388px;width:1px;height:1px;background:#5a5a5a;"></div>
<div class="a" style="left:4px;top:391px;width:1px;height:1px;background:#5a5a5a;"></div>
<svg class="a" style="left:101px;top:365px;" width="89" height="22"><text transform="translate(0.00 16.20) scale(1 1.14)" font-size="16.5" fill="#e4e4e4" stroke="#e4e4e4" stroke-width="0" font-family="Liberation Sans" textLength="81.40" lengthAdjust="spacingAndGlyphs">00:00:00;00</text></svg>
<div class="a" style="left:2px;top:392px;width:188px;height:215px;background:#232323;"></div>
<div class="a" style="left:192px;top:357px;width:1073px;height:1px;background:#4e4e4e;"></div>
<div class="a" style="left:192px;top:358px;width:1073px;height:20px;background:#3b3b3b;"></div>
<div class="a" style="left:192px;top:378px;width:1073px;height:1px;background:#262626;"></div>
<div class="a" style="left:192px;top:379px;width:1073px;height:13px;background:#383838;"></div>
<div class="a" style="left:192px;top:392px;width:1073px;height:215px;background:#212121;"></div>
<div class="a" style="left:193.3px;top:386px;width:1px;height:6px;background:#cfcfcf;"></div>
<div class="a" style="left:202.078px;top:389.5px;width:1px;height:2.5px;background:#bdbdbd;"></div>
<div class="a" style="left:210.85600000000002px;top:389.5px;width:1px;height:2.5px;background:#bdbdbd;"></div>
<div class="a" style="left:219.63400000000001px;top:389.5px;width:1px;height:2.5px;background:#bdbdbd;"></div>
<div class="a" style="left:228.412px;top:389.5px;width:1px;height:2.5px;background:#bdbdbd;"></div>
<div class="a" style="left:237.19px;top:389.5px;width:1px;height:2.5px;background:#bdbdbd;"></div>
<div class="a" style="left:245.96800000000002px;top:389.5px;width:1px;height:2.5px;background:#bdbdbd;"></div>
<div class="a" style="left:254.746px;top:389.5px;width:1px;height:2.5px;background:#bdbdbd;"></div>
<div class="a" style="left:263.524px;top:389.5px;width:1px;height:2.5px;background:#bdbdbd;"></div>
<div class="a" style="left:272.302px;top:389.5px;width:1px;height:2.5px;background:#bdbdbd;"></div>
<div class="a" style="left:281.08000000000004px;top:386px;width:1px;height:6px;background:#cfcfcf;"></div>
<div class="a" style="left:289.85800000000006px;top:389.5px;width:1px;height:2.5px;background:#bdbdbd;"></div>
<div class="a" style="left:298.636px;top:389.5px;width:1px;height:2.5px;background:#bdbdbd;"></div>
<div class="a" style="left:307.41400000000004px;top:389.5px;width:1px;height:2.5px;background:#bdbdbd;"></div>
<div class="a" style="left:316.19200000000006px;top:389.5px;width:1px;height:2.5px;background:#bdbdbd;"></div>
<div class="a" style="left:324.97px;top:389.5px;width:1px;height:2.5px;background:#bdbdbd;"></div>
<div class="a" style="left:333.74800000000005px;top:389.5px;width:1px;height:2.5px;background:#bdbdbd;"></div>
<div class="a" style="left:342.52600000000007px;top:389.5px;width:1px;height:2.5px;background:#bdbdbd;"></div>
<div class="a" style="left:351.30400000000003px;top:389.5px;width:1px;height:2.5px;background:#bdbdbd;"></div>
<div class="a" style="left:360.08200000000005px;top:389.5px;width:1px;height:2.5px;background:#bdbdbd;"></div>
<div class="a" style="left:368.86px;top:386px;width:1px;height:6px;background:#cfcfcf;"></div>
<div class="a" style="left:377.63800000000003px;top:389.5px;width:1px;height:2.5px;background:#bdbdbd;"></div>
<div class="a" style="left:386.416px;top:389.5px;width:1px;height:2.5px;background:#bdbdbd;"></div>
<div class="a" style="left:395.194px;top:389.5px;width:1px;height:2.5px;background:#bdbdbd;"></div>
<div class="a" style="left:403.97200000000004px;top:389.5px;width:1px;height:2.5px;background:#bdbdbd;"></div>
<div class="a" style="left:412.75px;top:389.5px;width:1px;height:2.5px;background:#bdbdbd;"></div>
<div class="a" style="left:421.528px;top:389.5px;width:1px;height:2.5px;background:#bdbdbd;"></div>
<div class="a" style="left:430.30600000000004px;top:389.5px;width:1px;height:2.5px;background:#bdbdbd;"></div>
<div class="a" style="left:439.084px;top:389.5px;width:1px;height:2.5px;background:#bdbdbd;"></div>
<div class="a" style="left:447.862px;top:389.5px;width:1px;height:2.5px;background:#bdbdbd;"></div>
<div class="a" style="left:456.64000000000004px;top:386px;width:1px;height:6px;background:#cfcfcf;"></div>
<div class="a" style="left:465.41800000000006px;top:389.5px;width:1px;height:2.5px;background:#bdbdbd;"></div>
<div class="a" style="left:474.196px;top:389.5px;width:1px;height:2.5px;background:#bdbdbd;"></div>
<div class="a" style="left:482.97400000000005px;top:389.5px;width:1px;height:2.5px;background:#bdbdbd;"></div>
<div class="a" style="left:491.75200000000007px;top:389.5px;width:1px;height:2.5px;background:#bdbdbd;"></div>
<div class="a" style="left:500.53000000000003px;top:389.5px;width:1px;height:2.5px;background:#bdbdbd;"></div>
<div class="a" style="left:509.30800000000005px;top:389.5px;width:1px;height:2.5px;background:#bdbdbd;"></div>
<div class="a" style="left:518.086px;top:389.5px;width:1px;height:2.5px;background:#bdbdbd;"></div>
<div class="a" style="left:526.864px;top:389.5px;width:1px;height:2.5px;background:#bdbdbd;"></div>
<div class="a" style="left:535.642px;top:389.5px;width:1px;height:2.5px;background:#bdbdbd;"></div>
<div class="a" style="left:544.4200000000001px;top:386px;width:1px;height:6px;background:#cfcfcf;"></div>
<div class="a" style="left:553.1980000000001px;top:389.5px;width:1px;height:2.5px;background:#bdbdbd;"></div>
<div class="a" style="left:561.9760000000001px;top:389.5px;width:1px;height:2.5px;background:#bdbdbd;"></div>
<div class="a" style="left:570.7540000000001px;top:389.5px;width:1px;height:2.5px;background:#bdbdbd;"></div>
<div class="a" style="left:579.532px;top:389.5px;width:1px;height:2.5px;background:#bdbdbd;"></div>
<div class="a" style="left:588.3100000000001px;top:389.5px;width:1px;height:2.5px;background:#bdbdbd;"></div>
<div class="a" style="left:597.0880000000001px;top:389.5px;width:1px;height:2.5px;background:#bdbdbd;"></div>
<div class="a" style="left:605.8660000000001px;top:389.5px;width:1px;height:2.5px;background:#bdbdbd;"></div>
<div class="a" style="left:614.6440000000001px;top:389.5px;width:1px;height:2.5px;background:#bdbdbd;"></div>
<div class="a" style="left:623.422px;top:389.5px;width:1px;height:2.5px;background:#bdbdbd;"></div>
<div class="a" style="left:632.2px;top:386px;width:1px;height:6px;background:#cfcfcf;"></div>
<div class="a" style="left:640.9780000000001px;top:389.5px;width:1px;height:2.5px;background:#bdbdbd;"></div>
<div class="a" style="left:649.7560000000001px;top:389.5px;width:1px;height:2.5px;background:#bdbdbd;"></div>
<div class="a" style="left:658.5340000000001px;top:389.5px;width:1px;height:2.5px;background:#bdbdbd;"></div>
<div class="a" style="left:667.312px;top:389.5px;width:1px;height:2.5px;background:#bdbdbd;"></div>
<div class="a" style="left:676.09px;top:389.5px;width:1px;height:2.5px;background:#bdbdbd;"></div>
<div class="a" style="left:684.868px;top:389.5px;width:1px;height:2.5px;background:#bdbdbd;"></div>
<div class="a" style="left:693.6460000000001px;top:389.5px;width:1px;height:2.5px;background:#bdbdbd;"></div>
<div class="a" style="left:702.4240000000001px;top:389.5px;width:1px;height:2.5px;background:#bdbdbd;"></div>
<div class="a" style="left:711.202px;top:389.5px;width:1px;height:2.5px;background:#bdbdbd;"></div>
<div class="a" style="left:719.98px;top:386px;width:1px;height:6px;background:#cfcfcf;"></div>
<div class="a" style="left:728.758px;top:389.5px;width:1px;height:2.5px;background:#bdbdbd;"></div>
<div class="a" style="left:737.5360000000001px;top:389.5px;width:1px;height:2.5px;background:#bdbdbd;"></div>
<div class="a" style="left:746.3140000000001px;top:389.5px;width:1px;height:2.5px;background:#bdbdbd;"></div>
<div class="a" style="left:755.092px;top:389.5px;width:1px;height:2.5px;background:#bdbdbd;"></div>
<div class="a" style="left:763.87px;top:389.5px;width:1px;height:2.5px;background:#bdbdbd;"></div>
<div class="a" style="left:772.648px;top:389.5px;width:1px;height:2.5px;background:#bdbdbd;"></div>
<div class="a" style="left:781.426px;top:389.5px;width:1px;height:2.5px;background:#bdbdbd;"></div>
<div class="a" style="left:790.2040000000001px;top:389.5px;width:1px;height:2.5px;background:#bdbdbd;"></div>
<div class="a" style="left:798.982px;top:389.5px;width:1px;height:2.5px;background:#bdbdbd;"></div>
<div class="a" style="left:807.76px;top:386px;width:1px;height:6px;background:#cfcfcf;"></div>
<div class="a" style="left:816.538px;top:389.5px;width:1px;height:2.5px;background:#bdbdbd;"></div>
<div class="a" style="left:825.316px;top:389.5px;width:1px;height:2.5px;background:#bdbdbd;"></div>
<div class="a" style="left:834.094px;top:389.5px;width:1px;height:2.5px;background:#bdbdbd;"></div>
<div class="a" style="left:842.872px;top:389.5px;width:1px;height:2.5px;background:#bdbdbd;"></div>
<div class="a" style="left:851.65px;top:389.5px;width:1px;height:2.5px;background:#bdbdbd;"></div>
<div class="a" style="left:860.428px;top:389.5px;width:1px;height:2.5px;background:#bdbdbd;"></div>
<div class="a" style="left:869.206px;top:389.5px;width:1px;height:2.5px;background:#bdbdbd;"></div>
<div class="a" style="left:877.984px;top:389.5px;width:1px;height:2.5px;background:#bdbdbd;"></div>
<div class="a" style="left:886.762px;top:389.5px;width:1px;height:2.5px;background:#bdbdbd;"></div>
<div class="a" style="left:895.54px;top:386px;width:1px;height:6px;background:#cfcfcf;"></div>
<div class="a" style="left:904.318px;top:389.5px;width:1px;height:2.5px;background:#bdbdbd;"></div>
<div class="a" style="left:913.096px;top:389.5px;width:1px;height:2.5px;background:#bdbdbd;"></div>
<div class="a" style="left:921.874px;top:389.5px;width:1px;height:2.5px;background:#bdbdbd;"></div>
<div class="a" style="left:930.6519999999999px;top:389.5px;width:1px;height:2.5px;background:#bdbdbd;"></div>
<div class="a" style="left:939.43px;top:389.5px;width:1px;height:2.5px;background:#bdbdbd;"></div>
<div class="a" style="left:948.208px;top:389.5px;width:1px;height:2.5px;background:#bdbdbd;"></div>
<div class="a" style="left:956.986px;top:389.5px;width:1px;height:2.5px;background:#bdbdbd;"></div>
<div class="a" style="left:965.764px;top:389.5px;width:1px;height:2.5px;background:#bdbdbd;"></div>
<div class="a" style="left:974.5419999999999px;top:389.5px;width:1px;height:2.5px;background:#bdbdbd;"></div>
<div class="a" style="left:983.3199999999999px;top:386px;width:1px;height:6px;background:#cfcfcf;"></div>
<div class="a" style="left:992.098px;top:389.5px;width:1px;height:2.5px;background:#bdbdbd;"></div>
<div class="a" style="left:1000.876px;top:389.5px;width:1px;height:2.5px;background:#bdbdbd;"></div>
<div class="a" style="left:1009.654px;top:389.5px;width:1px;height:2.5px;background:#bdbdbd;"></div>
<div class="a" style="left:1018.4319999999999px;top:389.5px;width:1px;height:2.5px;background:#bdbdbd;"></div>
<div class="a" style="left:1027.21px;top:389.5px;width:1px;height:2.5px;background:#bdbdbd;"></div>
<div class="a" style="left:1035.9879999999998px;top:389.5px;width:1px;height:2.5px;background:#bdbdbd;"></div>
<div class="a" style="left:1044.7659999999998px;top:389.5px;width:1px;height:2.5px;background:#bdbdbd;"></div>
<div class="a" style="left:1053.5439999999999px;top:389.5px;width:1px;height:2.5px;background:#bdbdbd;"></div>
<div class="a" style="left:1062.322px;top:389.5px;width:1px;height:2.5px;background:#bdbdbd;"></div>
<div class="a" style="left:1071.1px;top:386px;width:1px;height:6px;background:#cfcfcf;"></div>
<div class="a" style="left:1079.878px;top:389.5px;width:1px;height:2.5px;background:#bdbdbd;"></div>
<div class="a" style="left:1088.656px;top:389.5px;width:1px;height:2.5px;background:#bdbdbd;"></div>
<div class="a" style="left:1097.434px;top:389.5px;width:1px;height:2.5px;background:#bdbdbd;"></div>
<div class="a" style="left:1106.212px;top:389.5px;width:1px;height:2.5px;background:#bdbdbd;"></div>
<div class="a" style="left:1114.99px;top:389.5px;width:1px;height:2.5px;background:#bdbdbd;"></div>
<div class="a" style="left:1123.768px;top:389.5px;width:1px;height:2.5px;background:#bdbdbd;"></div>
<div class="a" style="left:1132.5459999999998px;top:389.5px;width:1px;height:2.5px;background:#bdbdbd;"></div>
<div class="a" style="left:1141.3239999999998px;top:389.5px;width:1px;height:2.5px;background:#bdbdbd;"></div>
<div class="a" style="left:1150.1019999999999px;top:389.5px;width:1px;height:2.5px;background:#bdbdbd;"></div>
<div class="a" style="left:1158.88px;top:386px;width:1px;height:6px;background:#cfcfcf;"></div>
<div class="a" style="left:1167.6580000000001px;top:389.5px;width:1px;height:2.5px;background:#bdbdbd;"></div>
<div class="a" style="left:1176.4360000000001px;top:389.5px;width:1px;height:2.5px;background:#bdbdbd;"></div>
<div class="a" style="left:1185.2140000000002px;top:389.5px;width:1px;height:2.5px;background:#bdbdbd;"></div>
<div class="a" style="left:1193.9920000000002px;top:389.5px;width:1px;height:2.5px;background:#bdbdbd;"></div>
<div class="a" style="left:1202.7700000000002px;top:389.5px;width:1px;height:2.5px;background:#bdbdbd;"></div>
<div class="a" style="left:1211.5480000000002px;top:389.5px;width:1px;height:2.5px;background:#bdbdbd;"></div>
<div class="a" style="left:1220.326px;top:389.5px;width:1px;height:2.5px;background:#bdbdbd;"></div>
<div class="a" style="left:1229.104px;top:389.5px;width:1px;height:2.5px;background:#bdbdbd;"></div>
<div class="a" style="left:1237.882px;top:389.5px;width:1px;height:2.5px;background:#bdbdbd;"></div>
<div class="a" style="left:1246.66px;top:386px;width:1px;height:6px;background:#cfcfcf;"></div>
<div class="a" style="left:1255.438px;top:389.5px;width:1px;height:2.5px;background:#bdbdbd;"></div>
<div class="a" style="left:1264.2160000000001px;top:389.5px;width:1px;height:2.5px;background:#bdbdbd;"></div>
<div class="a" style="left:192px;top:379px;width:1073px;height:13px;overflow:hidden">
<svg class="a" style="left:6px;top:-7px;" width="41" height="22"><text transform="translate(0.00 16.00) scale(1 1.06)" font-size="6.98" fill="#d0d0d0" stroke="#d0d0d0" stroke-width="0.22" font-family="Liberation Sans">0:00:00;00</text></svg>
<svg class="a" style="left:90px;top:-7px;" width="43" height="22"><text transform="translate(0.28 16.00) scale(1 1.06)" font-size="6.72" fill="#d0d0d0" stroke="#d0d0d0" stroke-width="0.22" font-family="Liberation Sans">00:00:10:00</text></svg>
<svg class="a" style="left:178px;top:-7px;" width="43" height="22"><text transform="translate(0.06 16.00) scale(1 1.06)" font-size="6.72" fill="#d0d0d0" stroke="#d0d0d0" stroke-width="0.22" font-family="Liberation Sans">00:00:19;29</text></svg>
<svg class="a" style="left:265px;top:-7px;" width="43" height="22"><text transform="translate(0.84 16.00) scale(1 1.06)" font-size="6.72" fill="#d0d0d0" stroke="#d0d0d0" stroke-width="0.22" font-family="Liberation Sans">00:00:29;29</text></svg>
<svg class="a" style="left:353px;top:-7px;" width="43" height="22"><text transform="translate(0.62 16.00) scale(1 1.06)" font-size="6.72" fill="#d0d0d0" stroke="#d0d0d0" stroke-width="0.22" font-family="Liberation Sans">00:00:39;29</text></svg>
<svg class="a" style="left:441px;top:-7px;" width="43" height="22"><text transform="translate(0.40 16.00) scale(1 1.06)" font-size="6.72" fill="#d0d0d0" stroke="#d0d0d0" stroke-width="0.22" font-family="Liberation Sans">00:00:49;29</text></svg>
<svg class="a" style="left:529px;top:-7px;" width="43" height="22"><text transform="translate(0.18 16.00) scale(1 1.06)" font-size="6.72" fill="#d0d0d0" stroke="#d0d0d0" stroke-width="0.22" font-family="Liberation Sans">00:00:59;28</text></svg>
<svg class="a" style="left:616px;top:-7px;" width="43" height="22"><text transform="translate(0.96 16.00) scale(1 1.06)" font-size="6.72" fill="#d0d0d0" stroke="#d0d0d0" stroke-width="0.22" font-family="Liberation Sans">00:01:10;00</text></svg>
<svg class="a" style="left:704px;top:-7px;" width="43" height="22"><text transform="translate(0.74 16.00) scale(1 1.06)" font-size="6.72" fill="#d0d0d0" stroke="#d0d0d0" stroke-width="0.22" font-family="Liberation Sans">00:01:20;00</text></svg>
<svg class="a" style="left:792px;top:-7px;" width="43" height="22"><text transform="translate(0.52 16.00) scale(1 1.06)" font-size="6.72" fill="#d0d0d0" stroke="#d0d0d0" stroke-width="0.22" font-family="Liberation Sans">00:01:29;29</text></svg>
<svg class="a" style="left:880px;top:-7px;" width="43" height="22"><text transform="translate(0.30 16.00) scale(1 1.06)" font-size="6.72" fill="#d0d0d0" stroke="#d0d0d0" stroke-width="0.22" font-family="Liberation Sans">00:01:39;29</text></svg>
<svg class="a" style="left:968px;top:-7px;" width="43" height="22"><text transform="translate(0.08 16.00) scale(1 1.06)" font-size="6.72" fill="#d0d0d0" stroke="#d0d0d0" stroke-width="0.22" font-family="Liberation Sans">00:01:49;29</text></svg>
<svg class="a" style="left:1055px;top:-7px;" width="43" height="22"><text transform="translate(0.86 16.00) scale(1 1.06)" font-size="6.72" fill="#d0d0d0" stroke="#d0d0d0" stroke-width="0.22" font-family="Liberation Sans">00:01:59;29</text></svg>
</div>
<div class="a" style="left:192px;top:381px;width:1.5px;height:226px;background:#d8d8d8;"></div>
<svg class="a" style="left:192.5px;top:381px;" width="4.5" height="10.5" viewBox="0 0 4.5 10.5"><path d="M0 0 H4.5 V7.5 L0 10.5 Z" fill="#f4f4f4"/><rect x="1" y="1.5" width="1.5" height="3" fill="#222"/></svg>
<svg class="a" style="left:192.5px;top:373.5px;" width="6" height="5.5" viewBox="0 0 6 5.5"><path d="M0 0.5 H6 L0 5.5 Z" fill="#d8d84a"/></svg>
<div class="a" style="left:1265px;top:357px;width:13px;height:250px;background:#282828;"></div>
<div class="a" style="left:1266px;top:358px;width:12px;height:12px;background:#5e5e5e;"></div>
<svg class="a" style="left:1268.5px;top:360.5px;" width="7" height="7" viewBox="0 0 7 7"><path d="M0.8 0 V7 M0.8 0.8 H6 V4.2 H0.8" fill="#5e5e5e" stroke="#f0f0f0" stroke-width="1.4"/></svg>
<div class="a" style="left:1265px;top:577px;width:13px;height:30px;background:#5c5c5c;"></div>
<div class="a" style="left:1269px;top:583px;width:5px;height:1px;background:#333;"></div>
<div class="a" style="left:1271px;top:581px;width:1px;height:5px;background:#333;"></div>
<div class="a" style="left:1269px;top:600px;width:5px;height:1px;background:#333;"></div>
<div class="a" style="left:2px;top:606px;width:188px;height:1px;background:#4a4a4a;"></div>
<div class="a" style="left:2px;top:607px;width:188px;height:38px;background:#3c3c3c;"></div>
<svg class="a" style="left:5px;top:615px;" width="61" height="22"><text transform="translate(0.00 16.30) scale(1 1.06)" font-size="8.5" fill="#d0d0d0" stroke="#d0d0d0" stroke-width="0.22" font-family="Liberation Sans" textLength="53.00" lengthAdjust="spacingAndGlyphs">Частота: 0,00</text></svg>
<div class="a" style="left:80px;top:629px;width:96px;height:1px;background:#1a1a1a;"></div>
<svg class="a" style="left:122.5px;top:625px;" width="9" height="9" viewBox="0 0 9 9"><rect x="0" y="0" width="9" height="9" rx="1" fill="#f0f0f0"/><rect x="2.5" y="2" width="1.3" height="4" fill="#333"/><rect x="5.2" y="2" width="1.3" height="4" fill="#333"/></svg>
<svg class="a" style="left:133px;top:635px;" width="8" height="4.5" viewBox="0 0 8 4.5"><path d="M0 4.5 L4 0 L8 4.5 Z" fill="#f0f0f0"/></svg>
<div class="a" style="left:192px;top:607px;width:14px;height:13px;background:#2b2b2b;"></div>
<svg class="a" style="left:197px;top:610.5px;" width="4" height="7" viewBox="0 0 4 7"><path d="M4 0 L0 3.5 L4 7 Z" fill="#eee"/></svg>
<div class="a" style="left:206px;top:608px;width:1017px;height:12px;background:#626262;"></div>
<div class="a" style="left:210.5px;top:610px;width:1.5px;height:8px;background:#3a3a3a;"></div>
<div class="a" style="left:1223px;top:607px;width:13px;height:13px;background:#2b2b2b;"></div>
<svg class="a" style="left:1229px;top:610.5px;" width="4" height="7" viewBox="0 0 4 7"><path d="M0 0 L4 3.5 L0 7 Z" fill="#eee"/></svg>
<div class="a" style="left:1236px;top:608px;width:42px;height:12px;background:#5e5e5e;"></div>
<svg class="a" style="left:1239.5px;top:611px;" width="6" height="6" viewBox="0 0 6 6"><path d="M3 0.3 V5.7 M0.3 3 H5.7" stroke="#eee" stroke-width="1.8"/></svg>
<div class="a" style="left:1256.5px;top:613.5px;width:5px;height:1.5px;background:#ddd;"></div>
<svg class="a" style="left:1268px;top:610.5px;" width="7" height="7" viewBox="0 0 7 7"><circle cx="3" cy="3" r="2.2" fill="none" stroke="#ddd" stroke-width="1.1"/><path d="M4.5 4.5 L6.8 6.8" stroke="#ddd" stroke-width="1.4"/></svg>
<div class="a" style="left:192px;top:620px;width:1086px;height:1px;background:#262626;"></div>
<div class="a" style="left:192px;top:621px;width:1086px;height:1px;background:#5a5a5a;"></div>
<div class="a" style="left:192px;top:622px;width:1086px;height:22px;background:#3e3e3e;"></div>
<svg class="a" style="left:198px;top:626px;" width="9" height="12" viewBox="0 0 9 12"><rect x="2.5" y="0" width="4" height="7.5" rx="2" fill="#e8a0b0"/><path d="M1 4.5 Q1 9 4.5 9 Q8 9 8 4.5" fill="none" stroke="#eee" stroke-width="1"/><path d="M4.5 9 V11 M2 11.5 H7" stroke="#eee" stroke-width="1"/></svg>
<svg class="a" style="left:214.5px;top:627px;" width="11" height="11" viewBox="0 0 11 11"><path d="M2 3 A4.2 4.2 0 1 1 2.5 8.5" fill="none" stroke="#eee" stroke-width="1.6"/><path d="M0 6.5 L5 8.5 L1 11.5Z" fill="#eee"/><circle cx="6" cy="1" r="1.2" fill="#7a8a9a"/></svg>
<svg class="a" style="left:232.5px;top:628px;" width="10" height="10" viewBox="0 0 10 10"><rect x="0" y="0" width="2" height="10" fill="#f0f0f0"/><path d="M3.5 0.5 L10 5 L3.5 9.5 Z" fill="#f0f0f0"/></svg>
<svg class="a" style="left:251.5px;top:627.5px;" width="9" height="10.5" viewBox="0 0 9 10.5"><path d="M0 0 L9 5.25 L0 10.5 Z" fill="#f2f2f2"/></svg>
<div class="a" style="left:268.5px;top:628px;width:3px;height:10px;background:#f0f0f0;"></div>
<div class="a" style="left:275px;top:628px;width:3px;height:10px;background:#f0f0f0;"></div>
<div class="a" style="left:286.5px;top:628px;width:9.5px;height:10px;background:#f0f0f0;"></div>
<svg class="a" style="left:304.5px;top:628.5px;" width="9" height="9" viewBox="0 0 9 9"><rect x="0" y="0" width="1.8" height="9" fill="#eee"/><path d="M9 0 L2 4.5 L9 9 Z" fill="#eee"/></svg>
<svg class="a" style="left:322.5px;top:628.5px;" width="9" height="9" viewBox="0 0 9 9"><rect x="7.2" y="0" width="1.8" height="9" fill="#eee"/><path d="M0 0 L7 4.5 L0 9 Z" fill="#eee"/></svg>
<svg class="a" style="left:340px;top:628.5px;" width="12" height="9" viewBox="0 0 12 9"><path d="M5 0 L0 4.5 L5 9 Z" fill="#eee"/><path d="M6 0 V9 M8.5 0 V9 M11 0 V9" stroke="#eee" stroke-width="1.3"/></svg>
<svg class="a" style="left:357px;top:628.5px;" width="12" height="9" viewBox="0 0 12 9"><path d="M7 0 L12 4.5 L7 9 Z" fill="#eee"/><path d="M1 0 V9 M3.5 0 V9 M6 0 V9" stroke="#eee" stroke-width="1.3"/></svg>
<div class="a" style="left:380px;top:625.5px;width:14.5px;height:14px;background:#3a9ad6;"></div>
<svg class="a" style="left:381.5px;top:627px;" width="12" height="11" viewBox="0 0 12 11"><path d="M0.5 0.5 L0.5 9 L2.5 7 L4 10 L5 9.5 L3.8 6.5 L6.3 6.5 Z" fill="#fff" stroke="#1a3a5a" stroke-width="0.5"/><path d="M9 1 V11 M7 1 L9 4 L11 1" fill="none" stroke="#fff" stroke-width="1.5"/></svg>
<svg class="a" style="left:399px;top:631px;" width="5" height="3" viewBox="0 0 5 3"><path d="M0 0 H5 L2.5 3 Z" fill="#ddd"/></svg>
<svg class="a" style="left:411px;top:627.5px;" width="12" height="11" viewBox="0 0 12 11"><path d="M0.5 0.5 L0.5 9 L2.5 7 L4 10 L5 9.5 L3.8 6.5 L6.3 6.5 Z" fill="#fff"/><circle cx="8" cy="3" r="1.6" fill="#eee"/><circle cx="10.5" cy="7" r="1.6" fill="#eee"/><circle cx="7.5" cy="9.5" r="1.6" fill="#eee"/><path d="M8 3 L10.5 7 L7.5 9.5" stroke="#eee" stroke-width="1"/></svg>
<svg class="a" style="left:428.5px;top:627.5px;" width="11" height="11" viewBox="0 0 11 11"><rect x="0.5" y="0.5" width="8" height="8" fill="none" stroke="#ddd" stroke-width="1" stroke-dasharray="1.5 1"/><path d="M4 3.5 L4 11 L6 9 L7.5 11.5 L8.5 11 L7.3 8.5 L10 8.5 Z" fill="#fff"/></svg>
<svg class="a" style="left:446px;top:627.5px;" width="12" height="11" viewBox="0 0 12 11"><rect x="0.5" y="0.5" width="8.5" height="8.5" fill="none" stroke="#ddd" stroke-width="1" stroke-dasharray="1.5 1"/><circle cx="5.5" cy="5.5" r="2.6" fill="none" stroke="#eee" stroke-width="1.2"/><path d="M7.5 7.5 L11 11" stroke="#eee" stroke-width="1.5"/></svg>
<div class="a" style="left:463px;top:627px;width:1px;height:12px;background:#2a2a2a;"></div>
<svg class="a" style="left:472px;top:628.5px;" width="8" height="9" viewBox="0 0 8 9"><path d="M0.5 0.5 L7.5 8.5 M7.5 0.5 L0.5 8.5" stroke="#5a5a5a" stroke-width="1.2"/></svg>
<svg class="a" style="left:488.5px;top:628px;" width="9" height="10" viewBox="0 0 9 10"><rect x="3" y="0" width="3" height="10" fill="#555"/><rect x="0" y="2" width="9" height="6" fill="#4e4e4e"/></svg>
<svg class="a" style="left:508.5px;top:628px;" width="9" height="10" viewBox="0 0 9 10"><rect x="3" y="0" width="3" height="10" fill="#555"/><rect x="0" y="2" width="9" height="6" fill="#4e4e4e"/></svg>
<svg class="a" style="left:525px;top:628px;" width="9" height="10" viewBox="0 0 9 10"><rect x="3" y="0" width="3" height="10" fill="#555"/><rect x="0" y="2" width="9" height="6" fill="#4e4e4e"/></svg>
<svg class="a" style="left:543.5px;top:628px;" width="9" height="10" viewBox="0 0 9 10"><rect x="3" y="0" width="3" height="10" fill="#555"/><rect x="0" y="2" width="9" height="6" fill="#4e4e4e"/></svg>
<svg class="a" style="left:562px;top:627.5px;" width="7" height="10" viewBox="0 0 7 10"><rect x="0" y="4.5" width="7" height="5.5" fill="#5e5e5e"/><path d="M1.5 5 V2.8 Q3.5 -0.5 5.5 2.8 V5" fill="none" stroke="#5e5e5e" stroke-width="1.2"/></svg>
<div class="a" style="left:577px;top:627px;width:1px;height:12px;background:#2a2a2a;"></div>
<svg class="a" style="left:584.5px;top:627.5px;" width="10" height="11" viewBox="0 0 10 11"><path d="M0.5 0.5 H9.5 V7 H4 L1.5 10.5 V0.5Z" fill="#c8b870" stroke="#222" stroke-width="0.6"/></svg>
<svg class="a" style="left:601.5px;top:627.5px;" width="11" height="11" viewBox="0 0 11 11"><path d="M1 11 V0.5 H4.5 V6 H1 M10 11 V0.5 H6.5 V6 H10" fill="#7cc47c" stroke="#7cc47c" stroke-width="1"/></svg>
<div class="a" style="left:618.5px;top:627px;width:1px;height:12px;background:#2a2a2a;"></div>
<div class="a" style="left:624px;top:625.5px;width:14.5px;height:14px;background:#3a9ad6;"></div>
<svg class="a" style="left:626px;top:627px;" width="10.5" height="11" viewBox="0 0 10.5 11"><path d="M2 10 V5 A3.25 3.25 0 0 1 8.5 5 V10" fill="none" stroke="#e77a8c" stroke-width="2.4"/><rect x="0.8" y="8.8" width="2.5" height="2" fill="#eee"/><rect x="7.2" y="8.8" width="2.5" height="2" fill="#eee"/></svg>
<div class="a" style="left:641.6px;top:625.5px;width:14.9px;height:14px;background:#3a9ad6;"></div>
<svg class="a" style="left:643px;top:627px;" width="12" height="11" viewBox="0 0 12 11"><rect x="0.5" y="0.5" width="11" height="10" fill="none" stroke="#1a3050" stroke-width="1"/><path d="M1 1 L11 10 M11 1 L1 10" stroke="#dff0ff" stroke-width="1"/><path d="M6 0.5 V10.5" stroke="#1a3050" stroke-width="0.8"/></svg>
<svg class="a" style="left:661px;top:627px;" width="12" height="12" viewBox="0 0 12 12"><rect x="0" y="4" width="9" height="6" fill="#f0f0f0"/><path d="M11.5 3 H5 M7.5 0.5 L5 3 L7.5 5.5" fill="none" stroke="#f0f0f0" stroke-width="1.2"/><rect x="1" y="10" width="1.8" height="2" fill="#f0f0f0"/></svg>
<svg class="a" style="left:679px;top:631px;" width="5" height="3" viewBox="0 0 5 3"><path d="M0 0 H5 L2.5 3 Z" fill="#ddd"/></svg>
<div class="a" style="left:688.7px;top:625.5px;width:14.8px;height:14px;background:#3a9ad6;"></div>
<svg class="a" style="left:690px;top:627px;" width="12" height="11" viewBox="0 0 12 11"><path d="M1 10 L6 2 L10 8" fill="none" stroke="#eee" stroke-width="1"/><circle cx="2.5" cy="8" r="1.8" fill="#f4f4f4"/><circle cx="6" cy="2" r="1.6" fill="#f4f4f4"/><rect x="6.5" y="6.5" width="5" height="4.5" fill="#f4f4f4"/></svg>
<svg class="a" style="left:707.5px;top:627.5px;" width="13" height="11" viewBox="0 0 13 11"><rect x="0.5" y="1.5" width="9" height="7" fill="none" stroke="#bbb" stroke-width="1"/><rect x="2" y="3" width="6" height="4" fill="#6a8aa0"/><path d="M10 0.5 H12.5 V5 M10.5 10 H12.5 V7" stroke="#e06070" stroke-width="0.9" fill="none"/><path d="M5 4 L5 11 L6.8 9.3 L8.2 11.6 L9.2 11 L8 8.8 L10.3 8.8 Z" fill="#fff" stroke="#333" stroke-width="0.5"/></svg>
<svg class="a" style="left:1075px;top:627.5px;" width="6" height="10" viewBox="0 0 6 10"><circle cx="3" cy="3" r="2.6" fill="#eee"/><path d="M3 5 V10" stroke="#eee" stroke-width="1.2"/></svg>
<svg class="a" style="left:1087px;top:620px;" width="52" height="22"><text transform="translate(0.80 16.60) scale(1 1.06)" font-size="8.5" fill="#dcdcdc" stroke="#dcdcdc" stroke-width="0.22" font-family="Liberation Sans" textLength="44.50" lengthAdjust="spacingAndGlyphs">00:00:00;00</text></svg>
<svg class="a" style="left:1145.6px;top:628.5px;" width="7" height="6.5" viewBox="0 0 7 6.5"><path d="M0 0 H7 V6.5 Z" fill="#c8b870"/></svg>
<svg class="a" style="left:1213.6px;top:628.7px;" width="11" height="8" viewBox="0 0 11 8"><rect x="0.5" y="0.5" width="10" height="7" fill="#c8b870" stroke="#1a1a1a" stroke-width="0.8"/><path d="M2.5 5.5 L5.5 2.5 L8.5 5.5" fill="none" stroke="#333" stroke-width="1"/><path d="M2 7 H9" stroke="#eee" stroke-width="1"/></svg>
<div class="a" style="left:0px;top:645px;width:1280px;height:1px;background:#1f1f1f;"></div>
<div class="a" style="left:0px;top:646px;width:1280px;height:15px;background:#3b3b3b;"></div>
<svg class="a" style="left:1116px;top:641px;" width="143" height="22"><text transform="translate(0.00 16.00) scale(1 1.06)" font-size="8.5" fill="#dcdcdc" stroke="#dcdcdc" stroke-width="0.22" font-family="Liberation Sans" textLength="135.00" lengthAdjust="spacingAndGlyphs">Время записи (2 каналов): 67:56:35</text></svg>
</body></html>
